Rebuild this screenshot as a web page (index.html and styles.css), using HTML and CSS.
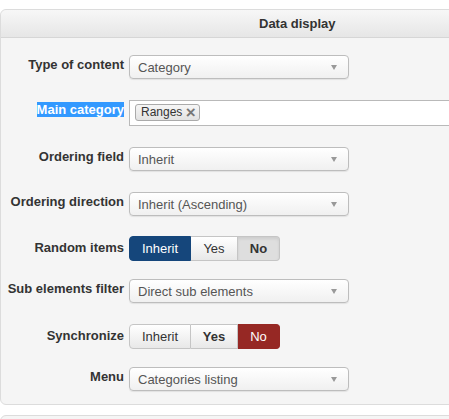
FILE: index.html
```html
<!DOCTYPE html>
<html lang="en">
<head>
  <meta charset="UTF-8" />
  <title>Data display</title>
  <link rel="stylesheet" href="styles.css">
</head>
<body>

  <div class="panel">
    <div class="panel-head">Data display</div>
    <div class="panel-body">

      <!-- Type of content -->
      <div class="row">
        <label class="row-label">Type of content</label>
        <div class="select"><span>Category</span><i class="caret"></i></div>
      </div>

      <!-- Main category -->
      <div class="row">
        <label class="row-label"><span class="picked">Main category</span></label>
        <div class="tags">
          <span class="tag">Ranges <span class="tag-x">&times;</span></span>
        </div>
      </div>

      <!-- Ordering -->
      <div class="row">
        <label class="row-label">Ordering field</label>
        <div class="select"><span>Inherit</span><i class="caret"></i></div>
      </div>

      <div class="row short">
        <label class="row-label">Ordering direction</label>
        <div class="select"><span>Inherit (Ascending)</span><i class="caret"></i></div>
      </div>

      <!-- Random items -->
      <div class="row switch">
        <label class="row-label">Random items</label>
        <div class="btn-group">
          <button class="btn btn-inherit active-blue">Inherit</button>
          <button class="btn btn-yes">Yes</button>
          <button class="btn btn-no pressed">No</button>
        </div>
      </div>

      <div class="row">
        <label class="row-label">Sub elements filter</label>
        <div class="select"><span>Direct sub elements</span><i class="caret"></i></div>
      </div>

      <!-- Synchronize -->
      <div class="row switch">
        <label class="row-label">Synchronize</label>
        <div class="btn-group">
          <button class="btn btn-inherit">Inherit</button>
          <button class="btn btn-yes bold">Yes</button>
          <button class="btn btn-no active-red">No</button>
        </div>
      </div>

      <div class="row">
        <label class="row-label">Menu</label>
        <div class="select"><span>Categories listing</span><i class="caret"></i></div>
      </div>

    </div>
  </div>

  <div class="panel next"></div>

</body>
</html>
```

FILE: styles.css
```css
* { box-sizing: border-box; margin: 0; padding: 0; }
html, body { overflow: hidden; }
body {
  font-family: "Liberation Sans", Arial, sans-serif;
  font-size: 13px;
  color: #333;
  background: #fff;
  width: 449px;
  height: 419px;
}
.panel {
  width: 470px;
  margin-top: 9px;
  background: #f5f5f5;
  border: 1px solid #dcdcdc;
  border-radius: 6px;
}
.panel.next { margin-top: 10px; height: 30px; }
.panel-head {
  height: 28px;
  line-height: 27px;
  padding-left: 258px;
  font-weight: bold;
  color: #333;
  background: linear-gradient(#f7f7f7, #e6e6e6);
  border-bottom: 1px solid #d6d6d6;
  border-radius: 6px 6px 0 0;
}
.panel-body { padding: 17px 0 13px; }

.row { display: flex; align-items: flex-start; margin-bottom: 21px; }
.row.short { margin-bottom: 20px; }
.row.switch { margin-bottom: 18px; }
.row:last-child { margin-bottom: 0; }
.row-label {
  width: 123px;
  margin-top: 1px;
  line-height: 18px;
  text-align: right;
  font-weight: bold;
  color: #333;
  flex-shrink: 0;
}
.row.switch .row-label { margin-top: 3px; }
.row-label + * { margin-left: 5px; }
.picked { background: #3399ff; color: #fff; }

.select {
  position: relative;
  width: 220px;
  height: 24px;
  padding-left: 8px;
  line-height: 23px;
  color: #555;
  background: linear-gradient(#fff, #f0f0f0);
  border: 1px solid #bdbdbd;
  border-radius: 4px;
  box-shadow: 0 1px 1px rgba(0,0,0,0.08);
}
.caret {
  position: absolute;
  right: 11px;
  top: 9px;
  border-left: 3px solid transparent;
  border-right: 3px solid transparent;
  border-top: 5px solid #999;
}

.tags {
  width: 340px;
  height: 26px;
  padding: 3px 5px;
  background: #fff;
  border: 1px solid #b9b9b9;
}
.tag {
  display: inline-block;
  height: 17px;
  padding: 0 3px 0 5px;
  font-size: 12px;
  line-height: 15px;
  color: #333;
  background: linear-gradient(#f6f6f6, #e2e2e2);
  border: 1px solid #aaa;
  border-radius: 3px;
}
.tag-x {
  font-size: 17px;
  font-weight: bold;
  color: #777;
  vertical-align: top;
  line-height: 15px;
}

.btn-group { display: flex; height: 25px; }
.btn {
  height: 25px;
  font-family: inherit;
  font-size: 13px;
  line-height: 23px;
  color: #333;
  background: linear-gradient(#fff, #e8e8e8);
  border: 1px solid #c5c5c5;
  border-left-width: 0;
}
.btn:first-child { border-left-width: 1px; border-radius: 4px 0 0 4px; }
.btn:last-child { border-radius: 0 4px 4px 0; }
.btn-inherit { width: 62px; }
.btn-yes { width: 47px; }
.btn-no { width: 42px; }
.bold { font-weight: bold; }
.btn.pressed {
  font-weight: bold;
  background: #dedede;
  box-shadow: inset 0 2px 3px rgba(0,0,0,0.08);
}
.btn.active-blue {
  color: #fff;
  background: #15467b;
  border-color: #15467b;
}
.btn.active-red {
  color: #fff;
  background: #962824;
  border-color: #962824;
}
```
